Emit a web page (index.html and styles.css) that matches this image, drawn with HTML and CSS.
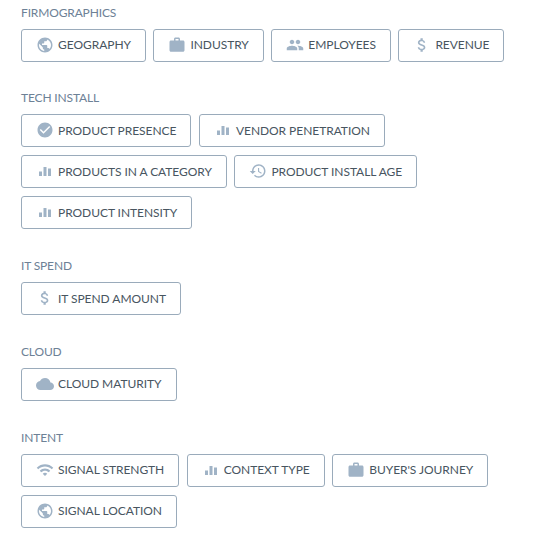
FILE: index.html
```html
<!DOCTYPE html>
<html lang="en">

<head>
  <meta charset="UTF-8" />
  <title>Filters</title>
  <link rel="stylesheet" href="styles.css">
</head>

<body>
  <svg class="defs" width="0" height="0">
    <symbol id="i-globe" viewBox="0 0 24 24"><path d="M12 2C6.48 2 2 6.48 2 12s4.48 10 10 10 10-4.48 10-10S17.52 2 12 2zm-1 17.93c-3.95-.49-7-3.85-7-7.93 0-.62.08-1.21.21-1.79L9 15v1c0 1.1.9 2 2 2v1.93zm6.9-2.54c-.26-.81-1-1.39-1.9-1.39h-1v-3c0-.55-.45-1-1-1H8v-2h2c.55 0 1-.45 1-1V7h2c1.1 0 2-.9 2-2v-.41c2.93 1.19 5 4.06 5 7.41 0 2.08-.8 3.97-2.1 5.39z"/></symbol>
    <symbol id="i-work" viewBox="0 0 24 24"><path d="M20 6h-4V4c0-1.11-.89-2-2-2h-4c-1.11 0-2 .89-2 2v2H4c-1.11 0-1.99.89-1.99 2L2 19c0 1.11.89 2 2 2h16c1.11 0 2-.89 2-2V8c0-1.11-.89-2-2-2zm-6 0h-4V4h4v2z"/></symbol>
    <symbol id="i-people" viewBox="0 0 24 24"><path d="M16 11c1.66 0 2.99-1.34 2.99-3S17.66 5 16 5c-1.66 0-3 1.34-3 3s1.34 3 3 3zm-8 0c1.66 0 2.99-1.34 2.99-3S9.66 5 8 5C6.34 5 5 6.34 5 8s1.34 3 3 3zm0 2c-2.33 0-7 1.17-7 3.5V19h14v-2.5c0-2.33-4.67-3.5-7-3.5zm8 0c-.29 0-.62.02-.97.05 1.16.84 1.97 1.97 1.97 3.45V19h6v-2.5c0-2.33-4.67-3.5-7-3.5z"/></symbol>
    <symbol id="i-money" viewBox="0 0 24 24"><path d="M11.8 10.9c-2.27-.59-3-1.2-3-2.15 0-1.09 1.01-1.85 2.7-1.85 1.78 0 2.44.85 2.5 2.1h2.21c-.07-1.72-1.12-3.3-3.21-3.81V3h-3v2.16c-1.94.42-3.5 1.68-3.5 3.61 0 2.31 1.91 3.46 4.7 4.13 2.5.6 3 1.48 3 2.41 0 .69-.49 1.79-2.7 1.79-2.06 0-2.87-.92-2.98-2.1h-2.2c.12 2.19 1.76 3.42 3.68 3.83V21h3v-2.15c1.95-.37 3.5-1.5 3.5-3.55 0-2.84-2.43-3.81-4.7-4.4z"/></symbol>
    <symbol id="i-check" viewBox="0 0 24 24"><path d="M12 2C6.48 2 2 6.48 2 12s4.48 10 10 10 10-4.48 10-10S17.52 2 12 2zm-2 15l-5-5 1.41-1.41L10 14.17l7.59-7.59L19 8l-9 9z"/></symbol>
    <symbol id="i-bars" viewBox="0 0 24 24"><path d="M4 12.67h4v6h-4zM10 6.67h4v12h-4zM16 8.5h4v10.17h-4z"/></symbol>
    <symbol id="i-history" viewBox="0 0 24 24"><path d="M13 3c-4.97 0-9 4.03-9 9H1l3.89 3.89.07.14L9 12H6c0-3.87 3.13-7 7-7s7 3.13 7 7-3.13 7-7 7c-1.93 0-3.68-.79-4.94-2.06l-1.42 1.42C8.27 19.99 10.51 21 13 21c4.97 0 9-4.03 9-9s-4.03-9-9-9zm-1 5v5l4.28 2.54.72-1.21-3.5-2.08V8H12z"/></symbol>
    <symbol id="i-cloud" viewBox="0 0 24 24"><path d="M19.35 10.04C18.67 6.59 15.64 4 12 4 9.11 4 6.6 5.64 5.35 8.04 2.34 8.36 0 10.91 0 14c0 3.31 2.69 6 6 6h13c2.76 0 5-2.24 5-5 0-2.64-2.05-4.78-4.65-4.96z"/></symbol>
    <symbol id="i-wifi" viewBox="0 0 24 24"><path d="M1 9l2 2c4.97-4.97 13.03-4.97 18 0l2-2C16.93 2.93 7.08 2.93 1 9zm8 8l3 3 3-3c-1.65-1.66-4.34-1.66-6 0zm-4-4l2 2c2.76-2.76 7.24-2.76 10 0l2-2C15.14 9.14 8.87 9.14 5 13z"/></symbol>
  </svg>

  <main class="filtros">
    <section class="grupo">
      <h2>FIRMOGRAPHICS</h2>
      <div class="chips">
        <button class="chip"><span class="ico"><svg><use href="#i-globe"/></svg></span>GEOGRAPHY</button>
        <button class="chip"><span class="ico"><svg><use href="#i-work"/></svg></span>INDUSTRY</button>
        <button class="chip"><span class="ico"><svg><use href="#i-people"/></svg></span>EMPLOYEES</button>
        <button class="chip"><span class="ico"><svg><use href="#i-money"/></svg></span>REVENUE</button>
      </div>
    </section>

    <section class="grupo">
      <h2>TECH INSTALL</h2>
      <div class="chips">
        <button class="chip"><span class="ico"><svg><use href="#i-check"/></svg></span>PRODUCT PRESENCE</button>
        <button class="chip"><span class="ico"><svg><use href="#i-bars"/></svg></span>VENDOR PENETRATION</button>
        <button class="chip"><span class="ico"><svg><use href="#i-bars"/></svg></span>PRODUCTS IN A CATEGORY</button>
        <button class="chip"><span class="ico"><svg><use href="#i-history"/></svg></span>PRODUCT INSTALL AGE</button>
        <button class="chip"><span class="ico"><svg><use href="#i-bars"/></svg></span>PRODUCT INTENSITY</button>
      </div>
    </section>

    <section class="grupo">
      <h2>IT SPEND</h2>
      <div class="chips">
        <button class="chip"><span class="ico"><svg><use href="#i-money"/></svg></span>IT SPEND AMOUNT</button>
      </div>
    </section>

    <section class="grupo">
      <h2>CLOUD</h2>
      <div class="chips">
        <button class="chip"><span class="ico"><svg><use href="#i-cloud"/></svg></span>CLOUD MATURITY</button>
      </div>
    </section>

    <section class="grupo">
      <h2>INTENT</h2>
      <div class="chips">
        <button class="chip"><span class="ico"><svg><use href="#i-wifi"/></svg></span>SIGNAL STRENGTH</button>
        <button class="chip"><span class="ico"><svg><use href="#i-bars"/></svg></span>CONTEXT TYPE</button>
        <button class="chip"><span class="ico"><svg><use href="#i-work"/></svg></span>BUYER'S JOURNEY</button>
        <button class="chip"><span class="ico"><svg><use href="#i-globe"/></svg></span>SIGNAL LOCATION</button>
      </div>
    </section>
  </main>
</body>

</html>
```

FILE: styles.css
```css
:root {
  --color-titulo: #6d8196;
  --color-texto: #48555f;
  --color-borde: #9aabbb;
  --color-icono: #a0b3c6;
}

* {
  box-sizing: border-box;
}

body {
  margin: 0;
  font-family: Lato, sans-serif;
  background: white;
  color: var(--color-texto);
}

.defs {
  position: absolute;
}

.filtros {
  display: flex;
  flex-direction: column;
  gap: 28.8px;
  padding: 4.5px 21px 0;
}

h2 {
  margin: 0 0 8px;
  font-size: 12px;
  line-height: 16px;
  font-weight: 400;
  letter-spacing: -0.15px;
  color: var(--color-titulo);
}

.chips {
  display: flex;
  flex-wrap: wrap;
  gap: 8px 7.5px;
}

.chip {
  display: flex;
  align-items: center;
  height: 33px;
  padding: 0 14px 1px 12px;
  border: 1px solid var(--color-borde);
  border-radius: 3px;
  background: white;
  color: var(--color-texto);
  font: 400 12px Lato, sans-serif;
  letter-spacing: -0.05px;
}

.ico {
  display: flex;
  justify-content: center;
  width: 22px;
  margin-right: 2px;
}

.ico svg {
  width: 18px;
  height: 18px;
  fill: var(--color-icono);
}
```
